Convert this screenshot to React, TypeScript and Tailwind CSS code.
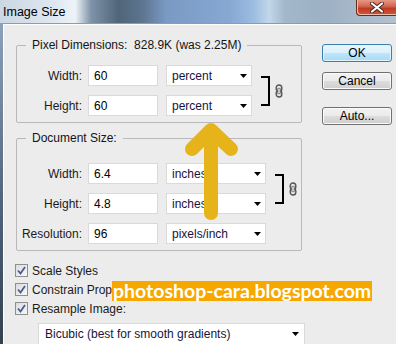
import React from "react";

const Arrow = () => (
  <svg width="7" height="4" viewBox="0 0 7 4" className="shrink-0">
    <path d="M0 0H7L3.5 4Z" fill="#000" />
  </svg>
);

const Select = ({ value, w }: { value: string; w: string }) => (
  <div
    className={`${w} h-[21px] bg-white border border-[#dadada] flex items-center justify-between pl-[5px] pr-[4px] text-[#151540]`}
  >
    <span>{value}</span>
    <Arrow />
  </div>
);

const Input = ({ value }: { value: string }) => (
  <div className="w-[70px] h-[21px] bg-white border border-[#dadada] flex items-center pl-[5px] text-black">
    {value}
  </div>
);

const Row = ({
  label,
  value,
  unit,
  selW,
}: {
  label: string;
  value: string;
  unit: string;
  selW: string;
}) => (
  <div className="flex items-center h-[21px]">
    <div className="w-[66px] text-right pr-[1px] text-[#1b1b1b]">{label}</div>
    <div className="ml-[5px]">
      <Input value={value} />
    </div>
    <div className="ml-[8px]">
      <Select value={unit} w={selW} />
    </div>
  </div>
);

const Chain = () => (
  <svg width="8" height="14" viewBox="0 0 8 14" className="shrink-0">
    <rect x="1.2" y="1" width="5.6" height="6.5" rx="2.8" fill="none" stroke="#555" strokeWidth="1.4" />
    <rect x="1.2" y="6.5" width="5.6" height="6.5" rx="2.8" fill="none" stroke="#555" strokeWidth="1.4" />
    <rect x="2.8" y="4.2" width="2.4" height="5.6" fill="#d8d8d8" stroke="#666" strokeWidth="0.7" />
  </svg>
);

const Bracket = ({ gap }: { gap: string }) => (
  <div className={`flex items-center ${gap}`}>
    <div className="w-[9px] h-[30px] border-t-2 border-r-2 border-b-2 border-black" />
    <div className="ml-[5px]">
      <Chain />
    </div>
  </div>
);

const Check = ({ label }: { label: string }) => (
  <div className="flex items-center h-[19px]">
    <div className="w-[13px] h-[13px] border border-[#8e8f8f] bg-[linear-gradient(135deg,#dcdcdc,#f8f8f8)] flex items-center justify-center">
      <svg width="9" height="9" viewBox="0 0 9 9">
        <path d="M1 4.5L3.5 7.5L8 1" fill="none" stroke="#4a5c93" strokeWidth="1.8" />
      </svg>
    </div>
    <span className="ml-[4px] text-[#1b1b1b]">{label}</span>
  </div>
);

const Button = ({ label, def }: { label: string; def?: boolean }) => (
  <div
    className={
      def
        ? "w-[70px] h-[18px] rounded-[3px] border border-[#3c7fb1] bg-[linear-gradient(180deg,#eaf6fd_0%,#d9f0fc_50%,#bee6fd_51%,#a7d9f5_100%)] shadow-[inset_0_0_0_1px_#dff3fd] flex items-center justify-center text-black"
        : "w-[70px] h-[18px] rounded-[3px] border border-[#707070] bg-[linear-gradient(180deg,#f2f2f2_0%,#ebebeb_50%,#dddddd_51%,#cfcfcf_100%)] shadow-[inset_0_0_0_1px_#fbfbfb] flex items-center justify-center text-black"
    }
  >
    {label}
  </div>
);

export default function App() {
  return (
    <div className="relative w-[396px] h-[344px] overflow-hidden font-['Liberation_Sans',Arial,sans-serif] text-[12px] leading-none">
      {/* title bar */}
      <div className="h-[23px] flex items-start bg-[linear-gradient(90deg,#cbd7e3_0%,#dfe8f1_14%,#eef3f8_19%,#7e93a8_23%,#506579_30%,#5d7590_36%,#7a9ac3_42%,#86a8d3_58%,#9cbde0_64%,#c2d7ea_68%,#a3b7ca_72%,#9db1c4_82%,#b3c1cf_100%)]">
        <span className="ml-[3px] mt-[6px] text-[12.5px] text-black">Image Size</span>
        <div className="ml-auto w-[40px] h-[16px] rounded-bl-[4px] border-l border-b border-[#6b2a22] bg-[linear-gradient(180deg,#e69a86_0%,#d2604a_45%,#bd3a22_55%,#cf5a3a_100%)] shadow-[inset_1px_-1px_0_#f0b8a8] flex items-center justify-center">
          <svg width="14" height="11" viewBox="0 0 14 11">
            <path d="M2 1.5L12 9.5M12 1.5L2 9.5" stroke="#4a2520" strokeWidth="4" strokeLinecap="round" />
            <path d="M2 1.5L12 9.5M12 1.5L2 9.5" stroke="#fff" strokeWidth="2.2" strokeLinecap="round" />
          </svg>
        </div>
      </div>

      <div className="flex h-[321px]">
        <div className="w-[3px] bg-[linear-gradient(180deg,#8ca2ba,#4d6178_60%,#34414f)]" />
        <div className="flex-1 bg-[#ececec] border-t border-[#8d9cab] shadow-[inset_1px_1px_0_#ffffff] pl-[13px] pt-[20px] flex items-start gap-[20px]">
          <div className="w-[286px] mt-[1px] flex flex-col">
            {/* Pixel Dimensions */}
            <div className="relative h-[78px] border border-[#b9b9b9] rounded-[2px] pt-[19px]">
              <span className="absolute -top-[7px] left-[9px] px-[6px] bg-[#ececec] whitespace-pre text-[#141414]">
                Pixel Dimensions:  828.9K (was 2.25M)
              </span>
              <div className="flex items-center">
                <div className="flex flex-col gap-[9px]">
                  <Row label="Width:" value="60" unit="percent" selW="w-[86px]" />
                  <Row label="Height:" value="60" unit="percent" selW="w-[86px]" />
                </div>
                <Bracket gap="ml-[9px]" />
              </div>
            </div>

            {/* Document Size */}
            <div className="relative mt-[15px] h-[113px] border border-[#b9b9b9] rounded-[2px] pt-[24px]">
              <span className="absolute -top-[7px] left-[9px] px-[6px] bg-[#ececec] text-[#141414]">
                Document Size:
              </span>
              <div className="flex flex-col gap-[9px]">
                <div className="flex items-start">
                  <div className="flex flex-col gap-[9px]">
                    <Row label="Width:" value="6.4" unit="inches" selW="w-[100px]" />
                    <Row label="Height:" value="4.8" unit="inches" selW="w-[100px]" />
                  </div>
                  <div className="mt-[11px]">
                    <Bracket gap="ml-[9px]" />
                  </div>
                </div>
                <Row label="Resolution:" value="96" unit="pixels/inch" selW="w-[100px]" />
              </div>
            </div>

            {/* options */}
            <div className="-ml-[1px] mt-[10px] flex flex-col">
              <Check label="Scale Styles" />
              <Check label="Constrain Proportions" />
              <Check label="Resample Image:" />
            </div>
            <div className="ml-[22px] mt-[5px]">
              <div className="w-[267px] h-[22px] bg-white border border-[#dadada] flex items-center justify-between pl-[6px] pr-[5px] text-[#151540]">
                <span>Bicubic (best for smooth gradients)</span>
                <Arrow />
              </div>
            </div>
          </div>

          <div className="flex flex-col">
            <Button label="OK" def />
            <div className="mt-[10px]">
              <Button label="Cancel" />
            </div>
            <div className="mt-[17px]">
              <Button label="Auto..." />
            </div>
          </div>
        </div>
      </div>

      {/* annotation arrow */}
      <svg
        className="absolute left-0 top-0 pointer-events-none"
        width="396"
        height="344"
        viewBox="0 0 396 344"
      >
        <g stroke="#e7b31a" strokeWidth="14" strokeLinecap="round" strokeLinejoin="round" fill="none">
          <path d="M192 149L211 130L231 149" />
          <path d="M211 132V213" />
        </g>
      </svg>

      {/* watermark */}
      <div className="absolute left-[112px] top-[281px] h-[20px] bg-[#f6a800] flex items-center pl-[1px] pr-[1px]">
        <span className="font-['Lato',sans-serif] font-bold text-[19.5px] text-white leading-none whitespace-nowrap">
          photoshop-cara.blogspot.com
        </span>
      </div>
    </div>
  );
}
